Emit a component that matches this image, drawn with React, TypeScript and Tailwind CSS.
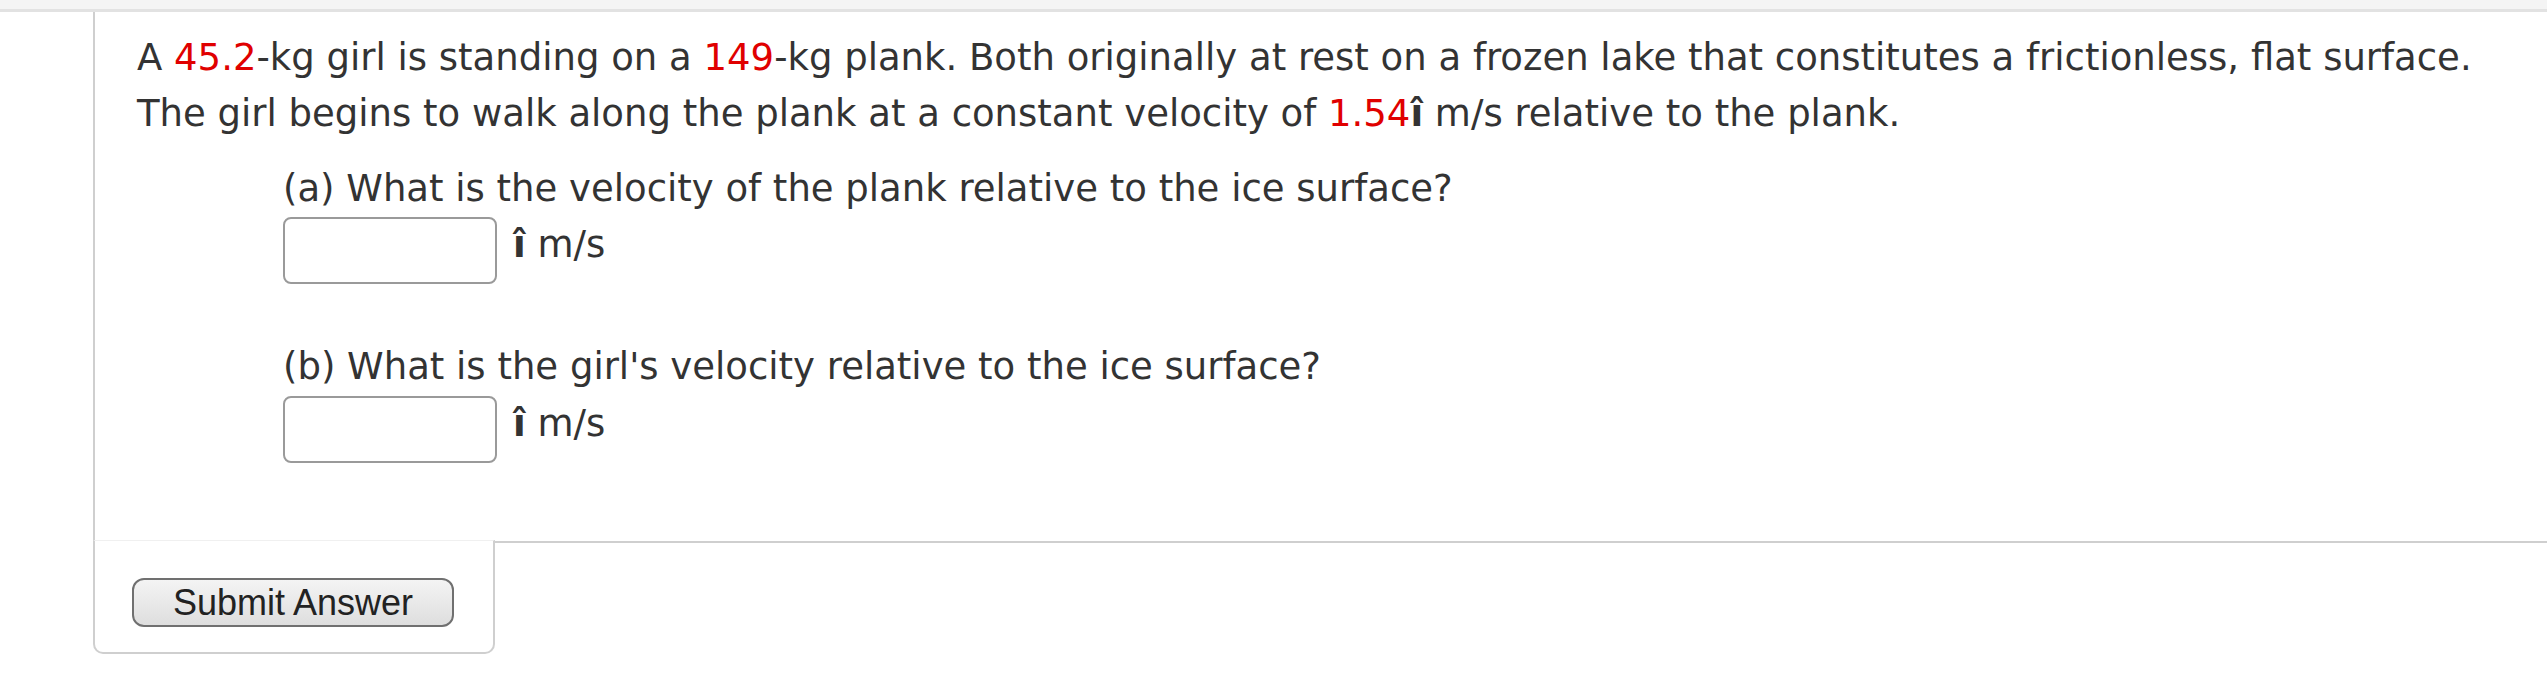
import React from 'react';

const RED = 'text-[#e00000]';

function Answer() {
  return (
    <div className="flex items-start">
      <input
        type="text"
        className="h-[67px] w-[214px] rounded-[8px] border-2 border-[#9a9a9a] bg-white outline-none"
      />
      <span className="ml-[16px]">
        <b>î</b> m/s
      </span>
    </div>
  );
}

export default function App() {
  return (
    <div className="min-h-[680px] bg-white text-[#333]">
      {/* top strip */}
      <div className="h-[12px] border-b-[3px] border-[#e2e2e2] bg-[#f4f4f4]" />

      <div className="ml-[93px]">
        {/* question */}
        <div className="h-[528px] border-l-2 border-[#cfcfcf] pl-[42px] pt-[18px] font-['DejaVu_Sans',Verdana,sans-serif] text-[37px] leading-[56px]">
          <p>
            A <span className={RED}>45.2</span>-kg girl is standing on a <span className={RED}>149</span>-kg plank.
            Both originally at rest on a frozen lake that constitutes a frictionless, flat surface.
            <br />
            The girl begins to walk along the plank at a constant velocity of <span className={RED}>1.54</span>
            <b>î</b> m/s relative to the plank.
          </p>

          <div className="ml-[146px] mt-[19px]">
            <p>(a) What is the velocity of the plank relative to the ice surface?</p>
            <Answer />
            <p className="mt-[55px]">(b) What is the girl's velocity relative to the ice surface?</p>
            <div className="mt-[1px]">
              <Answer />
            </div>
          </div>
        </div>

        {/* submit row */}
        <div className="flex">
          <div className="h-[114px] w-[402px] rounded-b-[10px] border-2 border-t border-[#cfcfcf] border-t-[#f0f0f0] pl-[37px] pt-[37px]">
            <button
              type="button"
              className="h-[49px] w-[322px] rounded-[12px] border-2 border-[#707070] bg-gradient-to-b from-[#f4f4f4] to-[#dedede] font-['Liberation_Sans',Arial,sans-serif] text-[36px] leading-none text-[#222]"
            >
              Submit Answer
            </button>
          </div>
          <div className="mt-[1px] flex-1 border-t-2 border-[#cfcfcf]" />
        </div>
      </div>
    </div>
  );
}
